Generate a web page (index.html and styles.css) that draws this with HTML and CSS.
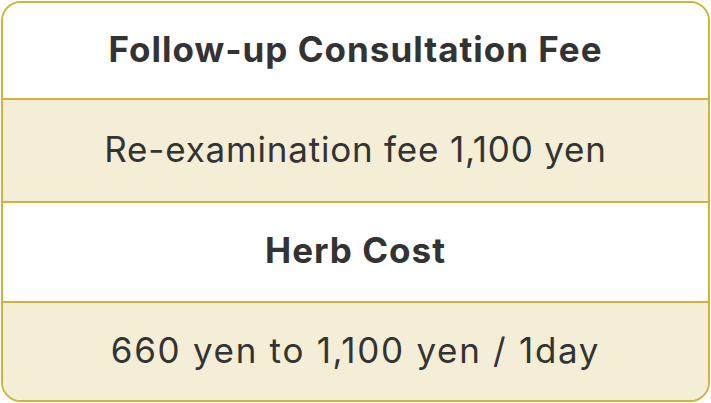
FILE: index.html
```html
<!DOCTYPE html>
<html>
<head>
<meta charset="utf-8">
<link rel="stylesheet" href="styles.css">
</head>
<body>
<div class="fee-table">
  <div class="row head r1">Follow-up Consultation Fee</div>
  <div class="row body r2">Re-examination fee 1,100 yen</div>
  <div class="row head r3">Herb Cost</div>
  <div class="row body r4">660 yen to 1,100 yen / 1day</div>
</div>
</body>
</html>
```

FILE: styles.css
```css
html, body {
  margin: 0;
  padding: 0;
  background: #ffffff;
}
body {
  padding: 1px;
}
.fee-table {
  width: 709px;
  height: 401px;
  box-sizing: border-box;
  border: 2px solid #d3b23c;
  border-radius: 20px;
  overflow: hidden;
  display: flex;
  flex-direction: column;
  font-family: "Inter", "Noto Sans", sans-serif;
  color: #333333;
}
.row {
  display: flex;
  align-items: center;
  justify-content: center;
  font-size: 35px;
  padding-bottom: 4px;
  box-sizing: border-box;
}
.row + .row {
  border-top: 2px solid #d3b23c;
}
.head {
  background: #ffffff;
  font-weight: 700;
  letter-spacing: 1px;
}
.body {
  background: #f5eed7;
  font-weight: 400;
  letter-spacing: 0.8px;
}
.r1 { height: 95px; }
.r2 { height: 103px; }
.r3 { height: 100px; }
.r4 { flex: 1; letter-spacing: 1.7px; }
```
